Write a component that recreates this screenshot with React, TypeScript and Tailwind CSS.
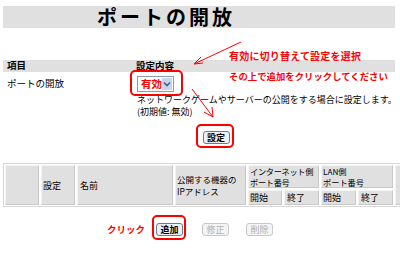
import React from "react";

const F = { fontFamily: '"Noto Sans CJK JP", "Noto Sans", sans-serif' };

function Btn({ label, disabled }: { label: string; disabled?: boolean }) {
  return (
    <div
      className={
        "w-[27px] h-[13px] flex items-center justify-center rounded-[3px] text-[9px] leading-none border whitespace-nowrap " +
        (disabled
          ? "border-[#c8c8c8] bg-[#f4f4f4] text-[#b0b0b0]"
          : "border-[#6f7a88] bg-[#eef0f2] text-black font-bold")
      }
    >
      {label}
    </div>
  );
}

export default function App() {
  const cell = "bg-[#e0e0e0] border border-[#f4f4f4] border-b-[#c8c8c8] border-r-[#c8c8c8] whitespace-nowrap";
  return (
    <div className="relative w-[400px] h-[254px] bg-white overflow-hidden text-black" style={F}>
      {/* title bar */}
      <div className="mt-[6px] ml-[3px] w-[392px] h-[22px] bg-[#e0e0e0] flex items-center pl-[94px]">
        <span className="text-[20px] font-bold tracking-[3px] leading-none">ポートの開放</span>
      </div>

      {/* header row */}
      <div className="mt-[32px] ml-[3px] w-[392px] h-[12px] bg-[#e0e0e0] flex items-center text-[9.5px] font-bold leading-none">
        <span className="ml-[4px] w-[129px]">項目</span>
        <span>設定内容</span>
      </div>

      {/* setting row */}
      <div className="flex mt-[4px] text-[9px] leading-none">
        <div className="ml-[7px] w-[130px] pt-[3px] text-[9.5px]">ポートの開放</div>
        <div className="flex flex-col">
          <div className="w-[37px] h-[16px] border border-[#8a9ab0] bg-white flex items-center justify-between pl-[3px] pr-[1px]">
            <span className="text-[10.5px] font-bold text-[#ff0000] leading-none whitespace-nowrap">有効</span>
            <span className="w-[12px] h-[12px] bg-[#c7d6ee] flex items-center justify-center">
              <svg width="8" height="6" viewBox="0 0 8 6">
                <path d="M1 1.5 L4 4.5 L7 1.5" stroke="#4d5f80" strokeWidth="1.6" fill="none" />
              </svg>
            </span>
          </div>
          <div className="mt-[2px] whitespace-nowrap leading-[12px]">
            ネットワークゲームやサーバーの公開をする場合に設定します。
          </div>
          <div className="whitespace-nowrap leading-[12px]">(初期値: 無効)</div>
        </div>
      </div>

      {/* set button */}
      <div className="flex justify-center mt-[13px] ml-[32px]">
        <Btn label="設定" />
      </div>

      {/* table */}
      <div className="mt-[19px] ml-[3px] w-[400px] border border-[#d8d8d8] p-[1px] text-[9px] leading-[11px]">
        <div
          className="grid gap-[2px]"
          style={{
            gridTemplateColumns: "34px 34px 96px 71px 34px 35px 35px 35px 12px",
            gridTemplateRows: "23px 15px",
          }}
        >
          <div className={cell + " row-span-2"}></div>
          <div className={cell + " row-span-2 flex items-center pl-[1px]"}>設定</div>
          <div className={cell + " row-span-2 flex items-center pl-[2px]"}>名前</div>
          <div className={cell + " row-span-2 flex items-center pl-[1px] text-[8.5px] leading-[12px]"}>
            <span>公開する機器の<br />IPアドレス</span>
          </div>
          <div className={cell + " col-span-2 flex items-center pl-[1px] text-[8.2px] leading-[11px] tracking-[-0.3px]"}>
            <span>インターネット側<br />ポート番号</span>
          </div>
          <div className={cell + " col-span-2 flex items-center pl-[1px] text-[8.2px] leading-[11px]"}>
            <span>LAN側<br />ポート番号</span>
          </div>
          <div className={cell + " row-span-2"}></div>
          <div className={cell + " flex items-center pl-[1px]"}>開始</div>
          <div className={cell + " flex items-center pl-[2px]"}>終了</div>
          <div className={cell + " flex items-center pl-[1px]"}>開始</div>
          <div className={cell + " flex items-center pl-[2px]"}>終了</div>
        </div>
      </div>

      {/* bottom buttons */}
      <div className="flex items-center mt-[16px] ml-[107px]">
        <span className="text-[9.5px] font-bold text-[#ff0000] leading-none">クリック</span>
        <div className="ml-[11px]"><Btn label="追加" /></div>
        <div className="ml-[19px]"><Btn label="修正" disabled /></div>
        <div className="ml-[17px]"><Btn label="削除" disabled /></div>
      </div>

      {/* annotations overlay */}
      <div className="absolute left-[229px] top-[51px] text-[10px] font-bold text-[#ff0000] leading-none whitespace-nowrap tracking-[0.2px]">
        有効に切り替えて設定を選択
      </div>
      <div className="absolute left-[229px] top-[72px] text-[9.4px] font-bold text-[#ff0000] leading-none whitespace-nowrap">
        その上で追加をクリックしてください
      </div>
      <div className="absolute left-[130px] top-[70px] w-[53px] h-[26px] border-2 border-[#ff0000] rounded-[5px]" />
      <div className="absolute left-[196px] top-[124px] w-[38px] h-[24px] border-2 border-[#ff0000] rounded-[5px]" />
      <div className="absolute left-[152px] top-[215px] w-[34px] h-[25px] border-2 border-[#ff0000] rounded-[5px]" />
      <svg className="absolute left-0 top-0" width="400" height="254">
        <g stroke="#ff0000" strokeWidth="1" fill="none">
          <line x1="241" y1="42" x2="194" y2="64" />
          <path d="M194 64 L201 57 M194 64 L203 63" />
          <line x1="192" y1="89" x2="213" y2="117" />
          <path d="M213 117 L204 112 M213 117 L212 107" />
        </g>
      </svg>
    </div>
  );
}
